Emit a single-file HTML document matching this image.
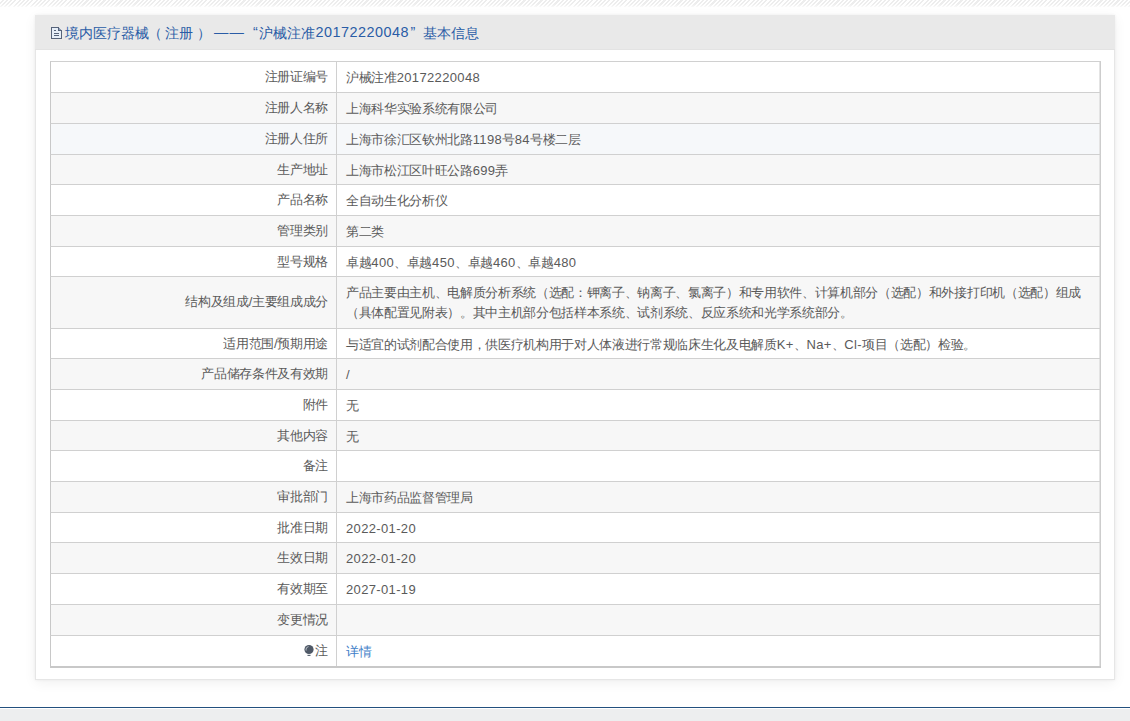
<!DOCTYPE html>
<html><head><meta charset="utf-8">
<style>
*{margin:0;padding:0;box-sizing:border-box}
html,body{width:1130px;height:721px;overflow:hidden;background:#fff;font-family:"Liberation Sans",sans-serif;font-size:13px;color:#555}
.stripe{position:absolute;left:0;top:0;width:1130px;height:7px;
 background:linear-gradient(to bottom,rgba(255,255,255,0) 0,rgba(255,255,255,0) 4px,rgba(255,255,255,.7) 7px),repeating-linear-gradient(135deg,#fff 0,#fff 1.5px,#ededed 1.5px,#ededed 3px)}
.card{position:absolute;left:35px;top:15px;width:1080px;height:665px;background:#fff;border:1px solid #e6e6e6;box-shadow:0 0 3px rgba(0,0,0,.06),0 3px 12px rgba(0,0,0,.06)}
.hd{position:absolute;left:35px;top:15px;width:1080px;height:35px;background:#e9e9e9;border-bottom:1px solid #e3e3e3;color:#2a5ca6;font-size:14.4px}
.hd span{position:absolute;top:9px;white-space:nowrap}
.ico{position:absolute;left:16px;top:12px;shape-rendering:crispEdges}
.r{position:absolute;left:50px;width:1051px;border-top:1px solid #d0d0d0;border-left:1px solid #c8c8c8;border-right:1px solid #cdcdcd;box-shadow:inset -1px 0 0 #e4e4e4;letter-spacing:-0.33px}
.r.g{background:#f7f7f7}
.r.h{background:#f6f8fa}
.r:before{content:"";position:absolute;left:285px;top:-1px;bottom:0;width:1px;background:#d0d0d0}
.l{position:absolute;right:772px;top:6px;white-space:nowrap;color:#5a5a5a}
.v{position:absolute;left:295px;top:6px;white-space:nowrap;color:#5a5a5a;line-height:19.5px}
.r2 .l{top:16px}
.r2 .v{top:6px}
.n{letter-spacing:0.35px}
.bot{position:absolute;left:50px;top:666px;width:1051px;height:2px;background:#c8c8c8}
.foot{position:absolute;left:0;top:707px;width:1130px;height:14px;background:#edeeef;border-top:1px solid #22507e;box-shadow:inset 0 1px 0 #fff}
a{color:#3f80c8;text-decoration:none}
.pin{display:inline-block;width:10px;height:13px;margin-right:1px;vertical-align:-2px}
</style></head><body>
<div class="stripe"></div>
<div class="card"></div>
<div class="hd">
  <svg class="ico" width="12" height="13" viewBox="0 0 12 13"><path d="M0.5 0.5H7.5L10.5 3.5V11.5H0.5Z" fill="#e6eef8" stroke="#56637a" stroke-width="1"/><path d="M7.5 0.5V3.5H10.5" fill="#8a9ab4" stroke="#56637a" stroke-width="1"/><path d="M3 3.5H5M3 6.5H7.5M3 8.5H7.5" stroke="#56637a" stroke-width="1"/></svg>
  <span style="left:30px">境内医疗器械</span>
  <span style="left:113px">（</span>
  <span style="left:130px">注册</span>
  <span style="left:162px">）</span>
  <span style="left:179px;letter-spacing:1px">——</span>
  <span style="left:218px">“</span>
  <span style="left:224px">沪械注准</span>
  <span style="left:280.5px;letter-spacing:0.5px">20172220048</span>
  <span style="left:375.5px">”</span>
  <span style="left:388px">基本信息</span>
</div>
<div class="r" style="top:61px;height:31px"><div class="l">注册证编号</div><div class="v">沪械注准<span class="n">20172220048</span></div></div>
<div class="r g" style="top:92px;height:31px"><div class="l">注册人名称</div><div class="v">上海科华实验系统有限公司</div></div>
<div class="r h" style="top:123px;height:31px"><div class="l">注册人住所</div><div class="v">上海市徐汇区钦州北路<span class="n">1198</span>号<span class="n">84</span>号楼二层</div></div>
<div class="r g" style="top:154px;height:30px"><div class="l">生产地址</div><div class="v">上海市松江区叶旺公路<span class="n">699</span>弄</div></div>
<div class="r" style="top:184px;height:31px"><div class="l">产品名称</div><div class="v">全自动生化分析仪</div></div>
<div class="r g" style="top:215px;height:31px"><div class="l">管理类别</div><div class="v">第二类</div></div>
<div class="r" style="top:246px;height:30px"><div class="l">型号规格</div><div class="v">卓越<span class="n">400</span>、卓越<span class="n">450</span>、卓越<span class="n">460</span>、卓越<span class="n">480</span></div></div>
<div class="r g r2" style="top:276px;height:52px"><div class="l">结构及组成/主要组成成分</div><div class="v">产品主要由主机、电解质分析系统（选配：钾离子、钠离子、氯离子）和专用软件、计算机部分（选配）和外接打印机（选配）组成<br>（具体配置见附表）。其中主机部分包括样本系统、试剂系统、反应系统和光学系统部分。</div></div>
<div class="r" style="top:328px;height:30px"><div class="l">适用范围/预期用途</div><div class="v">与适宜的试剂配合使用，供医疗机构用于对人体液进行常规临床生化及电解质<span class="n">K+</span>、<span class="n">Na+</span>、<span class="n">Cl-</span>项目（选配）检验。</div></div>
<div class="r g" style="top:358px;height:31px"><div class="l">产品储存条件及有效期</div><div class="v"><span class="n">/</span></div></div>
<div class="r" style="top:389px;height:31px"><div class="l">附件</div><div class="v">无</div></div>
<div class="r g" style="top:420px;height:30px"><div class="l">其他内容</div><div class="v">无</div></div>
<div class="r" style="top:450px;height:31px"><div class="l">备注</div><div class="v"></div></div>
<div class="r g" style="top:481px;height:31px"><div class="l">审批部门</div><div class="v">上海市药品监督管理局</div></div>
<div class="r" style="top:512px;height:30px"><div class="l">批准日期</div><div class="v"><span class="n">2022-01-20</span></div></div>
<div class="r g" style="top:542px;height:31px"><div class="l">生效日期</div><div class="v"><span class="n">2022-01-20</span></div></div>
<div class="r" style="top:573px;height:31px"><div class="l">有效期至</div><div class="v"><span class="n">2027-01-19</span></div></div>
<div class="r g" style="top:604px;height:31px"><div class="l">变更情况</div><div class="v"></div></div>
<div class="r" style="top:635px;height:31px"><div class="l"><svg class="pin" viewBox="0 0 10 13"><circle cx="5" cy="5.5" r="4.6" fill="#4e5866"/><path d="M2.2 6.5A3 3 0 0 1 4.5 2.6" fill="none" stroke="#c9ced6" stroke-width="0.9"/><rect x="3.5" y="10.8" width="3" height="1.2" fill="#5e6876"/></svg>注</div><div class="v"><a>详情</a></div></div>
<div class="bot"></div>
<div class="foot"></div>
</body></html>
